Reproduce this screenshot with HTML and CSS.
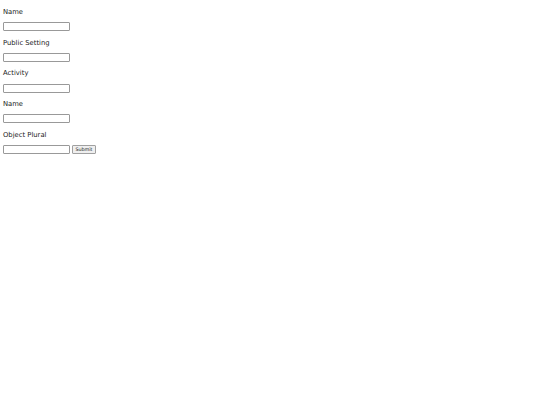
FILE: index.html
```html
<!DOCTYPE html>
<html>
<head>
<meta charset="utf-8">
<link rel="stylesheet" href="styles.css">
</head>
<body>
<form class="form">
  <label class="label">Name</label>
  <div class="row"><input class="field" type="text"></div>
  <label class="label">Public Setting</label>
  <div class="row"><input class="field" type="text"></div>
  <label class="label">Activity</label>
  <div class="row"><input class="field" type="text"></div>
  <label class="label">Name</label>
  <div class="row"><input class="field" type="text"></div>
  <label class="label">Object Plural</label>
  <div class="row"><input class="field" type="text"><button class="submit" type="button">Submit</button></div>
</form>
</body>
</html>
```

FILE: styles.css
```css
html, body {
  margin: 0;
  padding: 0;
  background: #ffffff;
}
.form {
  display: flex;
  flex-direction: column;
  padding: 8px 0 0 3px;
  font-family: "DejaVu Sans", Verdana, sans-serif;
  color: #222222;
}
.label {
  display: block;
  font-size: 6.8px;
  line-height: 9px;
  height: 9px;
  margin-bottom: 5.2px;
}
.row {
  display: flex;
  align-items: center;
  gap: 2px;
  height: 9px;
  margin-bottom: 7.5px;
}
.field {
  box-sizing: border-box;
  width: 67px;
  height: 9px;
  margin: 0;
  padding: 0;
  border: 1px solid #999999;
  border-radius: 1px;
  background: #ffffff;
}
.submit {
  box-sizing: border-box;
  width: 24px;
  height: 9px;
  margin: 0;
  padding: 0;
  font-family: "DejaVu Sans", Verdana, sans-serif;
  font-size: 4.8px;
  line-height: 7px;
  color: #222222;
  background: #efefef;
  border: 1px solid #a0a0a0;
  border-radius: 1px;
}
```
